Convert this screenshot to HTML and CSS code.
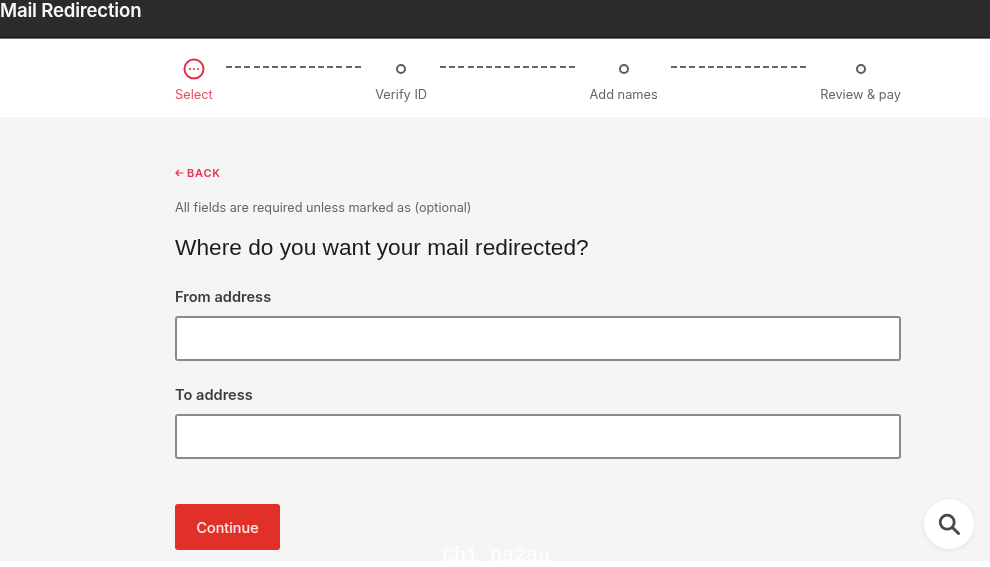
FILE: index.html
```html
<!DOCTYPE html>
<html lang="en">
<head>
<meta charset="utf-8">
<title>Mail Redirection</title>
<link rel="stylesheet" href="styles.css">
</head>
<body>
<header class="topbar"><span class="topbar-title">Mail Redirection</span></header>
<nav class="stepper-band">
  <ol class="stepper">
    <li class="step step-active">
      <svg class="step-icon" width="22" height="22" viewBox="0 0 22 22"><circle cx="11" cy="11" r="9.5" fill="none" stroke="#e8304a" stroke-width="2"/><circle cx="7" cy="11" r="1.1" fill="#e8304a"/><circle cx="11" cy="11" r="1.1" fill="#e8304a"/><circle cx="15" cy="11" r="1.1" fill="#e8304a"/></svg>
      <span class="step-label">Select</span>
    </li>
    <li class="connector"></li>
    <li class="step">
      <svg class="step-icon" width="22" height="22" viewBox="0 0 22 22"><circle cx="11" cy="11" r="4" fill="none" stroke="#5c5c5c" stroke-width="2"/></svg>
      <span class="step-label">Verify ID</span>
    </li>
    <li class="connector"></li>
    <li class="step">
      <svg class="step-icon" width="22" height="22" viewBox="0 0 22 22"><circle cx="11" cy="11" r="4" fill="none" stroke="#5c5c5c" stroke-width="2"/></svg>
      <span class="step-label">Add names</span>
    </li>
    <li class="connector"></li>
    <li class="step">
      <svg class="step-icon" width="22" height="22" viewBox="0 0 22 22"><circle cx="11" cy="11" r="4" fill="none" stroke="#5c5c5c" stroke-width="2"/></svg>
      <span class="step-label">Review &amp; pay</span>
    </li>
  </ol>
</nav>
<main class="content">
  <a class="back" href="#"><svg width="9" height="8" viewBox="0 0 9 8"><path d="M8.5 4H1M4 1 1 4l3 3" fill="none" stroke="#e8304a" stroke-width="1.2"/></svg>BACK</a>
  <p class="note">All fields are required unless marked as (optional)</p>
  <h1 class="heading">Where do you want your mail redirected?</h1>
  <form class="form">
    <label class="field-label" for="from">From address</label>
    <input class="field-input" id="from" type="text">
    <label class="field-label field-label-second" for="to">To address</label>
    <input class="field-input" id="to" type="text">
    <button class="continue" type="button">Continue</button>
  </form>
  <button class="search-fab" type="button" aria-label="Search">
    <svg width="24" height="24" viewBox="0 0 24 24"><circle cx="10.2" cy="10.2" r="7" fill="none" stroke="#4a4a4a" stroke-width="2.8"/><path d="m15.5 15.5 6 6" stroke="#4a4a4a" stroke-width="3" stroke-linecap="round"/></svg>
  </button>
  <span class="watermark">Chi na2au</span>
</main>
</body>
</html>
```
FILE: styles.css
```css
* { box-sizing: border-box; }
html, body { margin: 0; padding: 0; background: #fff; }
body {
  height: 567px;
  overflow: hidden;
  font-family: Inter, "Noto Sans", sans-serif;
  color: #333;
}
.topbar {
  height: 39px;
  background: #2b2b2b;
  border-bottom: 1px solid #777;
  box-shadow: inset 0 -1px 0 #161616;
  color: #f4f6f8;
  font-size: 18.6px;
  font-weight: 600;
  line-height: 20px;
}
.topbar-title { display: block; letter-spacing: -0.2px; filter: blur(0.4px); }
.stepper-band { height: 78px; background: #fff; padding: 19px 89px 0 175px; }
.stepper { display: flex; gap: 13px; list-style: none; margin: 0; padding: 0; }
.step { display: flex; flex-direction: column; align-items: center; }
.step-icon { display: block; filter: blur(0.3px); }
.step-label { margin-top: 7px; font-size: 12.8px; line-height: 16px; color: #666; white-space: nowrap; filter: blur(0.4px); }
.step-active .step-label { color: #ea4c62; }
.connector { flex: 1; height: 2px; margin-top: 8px; background: repeating-linear-gradient(90deg, #666 0 6px, transparent 6px 9.2px); }
.content { position: relative; height: 444px; background: #f5f5f5; padding: 50px 89px 0 175px; }
.back { display: flex; align-items: center; gap: 3px; height: 12px; color: #e8304a; font-size: 11px; font-weight: 600; letter-spacing: 0.8px; text-decoration: none; filter: blur(0.3px); }
.note { margin: 21px 0 0; font-size: 12.7px; line-height: 16px; color: #666; filter: blur(0.4px); }
.heading { margin: 17px 0 0; font-family: "Liberation Sans", Arial, sans-serif; font-size: 22.7px; font-weight: 400; line-height: 28px; color: #1c1c1c; filter: blur(0.3px); }
.form { display: flex; flex-direction: column; margin-top: 27px; }
.field-label { font-size: 14.6px; font-weight: 600; line-height: 18px; color: #3d3d3d; filter: blur(0.4px); }
.field-label-second { margin-top: 25px; }
.field-input { height: 45px; margin-top: 10px; background: #fff; border: 2px solid #8a8a8a; border-radius: 3px; }
.continue { width: 105px; height: 46px; margin-top: 45px; padding: 0; border: 0; border-radius: 3px; background: #e22f27; color: #f9e8e6; font-family: Inter, "Noto Sans", sans-serif; font-size: 14.4px; font-weight: 500; }
.search-fab { position: absolute; left: 924px; top: 382px; display: flex; align-items: center; justify-content: center; width: 50px; height: 50px; padding: 0; border: 0; border-radius: 50%; background: #fff; box-shadow: 0 1px 4px rgba(0,0,0,0.08); }
.watermark { position: absolute; left: 442px; top: 427px; font-family: "Liberation Mono", monospace; font-size: 20px; line-height: 24px; color: #fff; }
```
